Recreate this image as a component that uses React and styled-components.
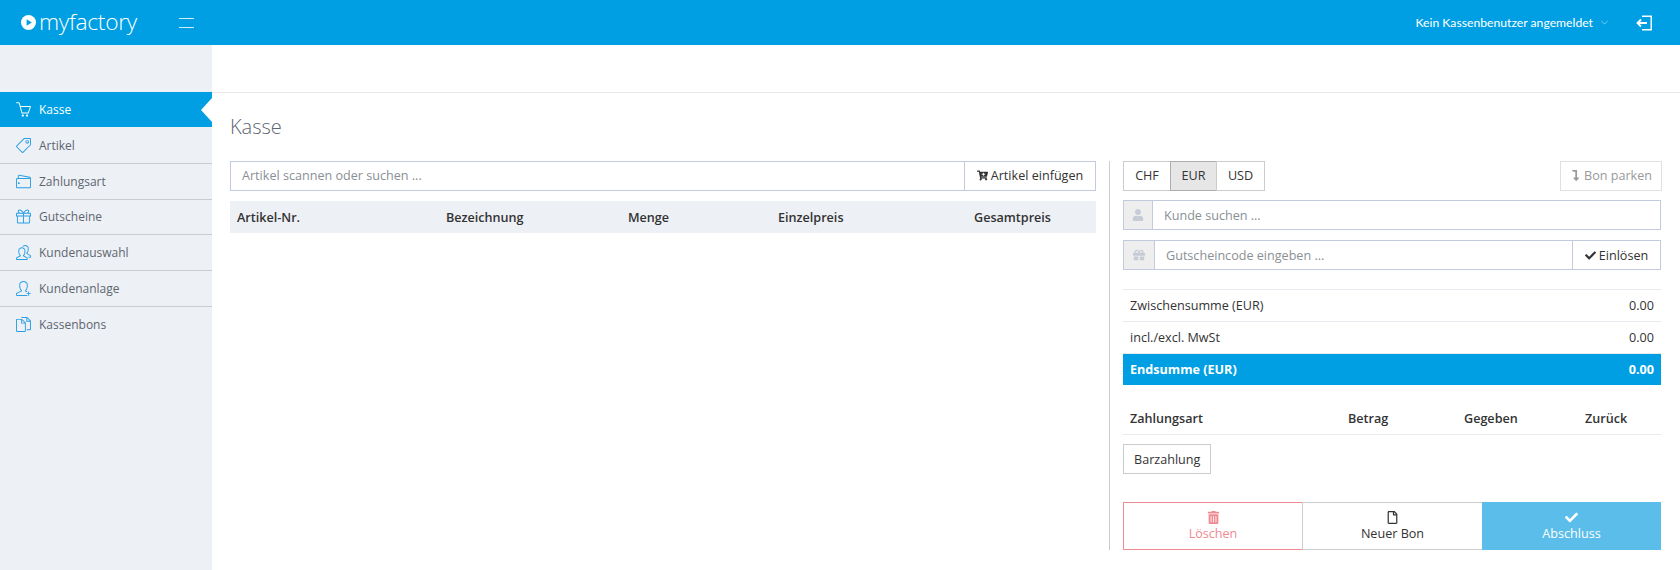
import React from 'react';
import styled, {createGlobalStyle} from 'styled-components';
import {SlBasket, SlTag, SlWallet, SlPresent, SlPeople, SlUserFollow, SlDocs, SlArrowDown} from 'react-icons/sl';
import {FaCartPlus, FaCheck, FaTrashAlt, FaRegFile, FaUser, FaGift, FaLevelDownAlt} from 'react-icons/fa';

const GlobalStyle = createGlobalStyle`
  html, body { margin: 0; padding: 0; background: #fff; }
  body { font-family: "Open Sans", "Liberation Sans", sans-serif; font-size: 12.6px; color: #333; }
  * { box-sizing: border-box; }
`;

const Page = styled.div`
  width: 1680px;
  height: 570px;
  display: flex;
  flex-direction: column;
  overflow: hidden;
`;

const TopBar = styled.header`
  height: 45px;
  flex: none;
  background: #009fe3;
  color: #fff;
  display: flex;
  align-items: center;
  padding: 0 0 0 21px;
`;

const Logo = styled.div`
  display: flex;
  align-items: center;
  width: 158px;
  font-size: 22.8px;
  font-weight: 300;
  letter-spacing: -0.3px;
  gap: 3px;
  padding-bottom: 3px;
  svg { width: 15px; height: 15px; margin-top: 3px; }
`;

const Burger = styled.div`
  width: 15px;
  height: 10px;
  border-top: 1px solid #d5effa;
  border-bottom: 1px solid #d5effa;
`;

const UserMenu = styled.div`
  margin-left: auto;
  display: flex;
  align-items: center;
  font-family: Lato, "Open Sans", sans-serif;
  font-size: 12.2px;
  gap: 8px;
  svg { width: 7px; height: 7px; color: #b5e2f6; }
`;

const Logout = styled.div`
  width: 16px;
  margin: 0 28px 0 28px;
  display: flex;
  svg { width: 16px; height: 16px; }
`;

const Body = styled.div`
  flex: 1;
  display: flex;
  min-height: 0;
`;

const Sidebar = styled.nav`
  width: 212px;
  flex: none;
  background: #edf0f5;
  padding-top: 47px;
`;

const NavItem = styled.div`
  position: relative;
  height: ${p => (p.$active ? '35px' : '36px')};
  display: flex;
  align-items: center;
  gap: 8px;
  padding: 0 0 1px 16px;
  font-size: 12px;
  color: ${p => (p.$active ? '#fff' : '#5d6670')};
  background: ${p => (p.$active ? '#009fe3' : 'transparent')};
  border-bottom: ${p => (p.$active ? 'none' : '1px solid #c9ccd0')};
  &:nth-child(2) { height: 37px; padding-bottom: 0; }
  &:nth-child(4) { height: 35px; }
  &:last-child { border-bottom: none; }
  svg { width: 15px; height: 15px; color: ${p => (p.$active ? '#fff' : '#2a9fe6')}; }
  ${p => p.$active && `
    &::after {
      content: "";
      position: absolute;
      right: 0;
      top: 6px;
      border-style: solid;
      border-width: 12px 11px 12px 0;
      border-color: transparent #fff transparent transparent;
    }
  `}
`;

const Main = styled.main`
  flex: 1;
  min-width: 0;
  display: flex;
  flex-direction: column;
`;

const Strip = styled.div`
  height: 48px;
  flex: none;
  border-bottom: 1px solid #e8e8e8;
`;

const Content = styled.div`
  flex: 1;
  padding: 0 19px 21px 18px;
  display: flex;
  flex-direction: column;
`;

const Title = styled.h1`
  margin: 0;
  height: 68px;
  padding-top: 20px;
  font-size: 20px;
  line-height: 27px;
  font-weight: 300;
  color: #5c6670;
`;

const Columns = styled.div`
  flex: 1;
  display: flex;
`;

const LeftCol = styled.section`
  width: 866px;
  flex: none;
`;

const RightCol = styled.section`
  flex: 1;
  margin-left: 13px;
  padding-left: 13px;
  border-left: 1px solid #ccc;
`;

const Group = styled.div`
  display: flex;
  height: 30px;
  margin-bottom: ${p => p.$mb || 0}px;
`;

const SearchGroup = styled(Group)`
  input, button { padding-bottom: 2px; }
`;

const Input = styled.input`
  flex: 1;
  min-width: 0;
  height: 100%;
  border: 1px solid #c2cbdd;
  padding: 0 11px;
  font: inherit;
  outline: none;
  &::placeholder { color: #8a8f94; opacity: 1; }
`;

const Addon = styled.span`
  width: ${p => p.$w}px;
  flex: none;
  display: flex;
  align-items: center;
  justify-content: center;
  background: #eee;
  border: 1px solid #c2cbdd;
  border-right: none;
  color: #c5ccd6;
  svg { width: 12px; height: 12px; }
`;

const Button = styled.button`
  height: 30px;
  padding: 0 10px;
  background: ${p => (p.$active ? '#e6e6e6' : '#fff')};
  border: 1px solid ${p => (p.$active ? '#adadad' : '#ccc')};
  color: #333;
  font: inherit;
  display: inline-flex;
  align-items: center;
  justify-content: center;
  gap: 3px;
  white-space: nowrap;
  svg { width: 11px; height: 11px; }
`;

const AppendButton = styled(Button)`
  width: ${p => p.$w}px;
  border-color: #c2cbdd;
  border-left: 0;
  padding: 0;
`;

const ParkButton = styled(Button)`
  margin-left: auto;
  margin-right: -1px;
  width: 102px;
  padding: 0;
  color: #999;
  border-color: #e0e0e0;
`;

const TableHead = styled.div`
  display: grid;
  grid-template-columns: 209px 182px 150px 196px 1fr;
  height: 32px;
  align-items: center;
  margin-top: 10px;
  padding-left: 7px;
  background: #edf0f5;
  font-weight: 600;
  color: #333;
`;

const Toolbar = styled.div`
  display: flex;
  margin-bottom: 9px;
  button { padding-bottom: 2px; }
`;

const CurrencyButton = styled(Button)`
  width: ${p => p.$w}px;
  padding: 0;
  margin-right: -1px;
`;

const Totals = styled.div`
  margin-top: 19px;
  border-top: 1px solid #e7eaee;
`;

const TotalRow = styled.div`
  height: ${p => (p.$total ? '31px' : '32px')};
  display: flex;
  justify-content: space-between;
  align-items: center;
  padding: 0 7px 1px;
  border-bottom: ${p => (p.$total ? 'none' : '1px solid #e7eaee')};
  background: ${p => (p.$total ? '#009fe3' : 'transparent')};
  color: ${p => (p.$total ? '#fff' : '#333')};
  font-weight: ${p => (p.$total ? 700 : 400)};
`;

const PayHead = styled.div`
  display: grid;
  grid-template-columns: 218px 116px 121px 1fr;
  height: 34px;
  align-items: center;
  margin-top: 16px;
  padding: 2px 0 0 7px;
  border-bottom: 1px solid #e7eaee;
  font-weight: 600;
`;

const CashRow = styled.div`
  margin-top: 9px;
`;

const Actions = styled.div`
  display: grid;
  grid-template-columns: 180px 180px 1fr;
  margin-top: 28px;
  height: 48px;
`;

const ActionButton = styled.button`
  display: flex;
  flex-direction: column;
  align-items: center;
  justify-content: center;
  gap: 1px;
  font: inherit;
  border: 1px solid ${p => p.$border};
  background: ${p => p.$bg};
  color: ${p => p.$color};
  margin-left: ${p => (p.$joined ? '-1px' : '0')};
  svg { width: 13px; height: 13px; }
`;

const nav = [
  ['Kasse', SlBasket],
  ['Artikel', SlTag],
  ['Zahlungsart', SlWallet],
  ['Gutscheine', SlPresent],
  ['Kundenauswahl', SlPeople],
  ['Kundenanlage', SlUserFollow],
  ['Kassenbons', SlDocs],
];

export default function App() {
  return (
    <Page>
      <GlobalStyle />
      <TopBar>
        <Logo>
          <svg viewBox="0 0 16 16">
            <circle cx="8" cy="8" r="8" fill="#fff" />
            <path d="M6 4.5 L11.5 8 L6 11.5 Z" fill="#009fe3" />
          </svg>
          myfactory
        </Logo>
        <Burger />
        <UserMenu>
          Kein Kassenbenutzer angemeldet <SlArrowDown />
        </UserMenu>
        <Logout>
          <svg viewBox="0 0 16 16" fill="none" stroke="#fff" strokeWidth="1.4">
            <path d="M6 1.2 H15.2 V14.8 H6" />
            <path d="M11 8 H1.5 M5 4.5 L1.5 8 L5 11.5" strokeWidth="1.8" />
          </svg>
        </Logout>
      </TopBar>
      <Body>
        <Sidebar>
          {nav.map(([label, Icon], i) => (
            <NavItem key={label} $active={i === 0}>
              <Icon />
              {label}
            </NavItem>
          ))}
        </Sidebar>
        <Main>
          <Strip />
          <Content>
            <Title>Kasse</Title>
            <Columns>
              <LeftCol>
                <SearchGroup>
                  <Input placeholder="Artikel scannen oder suchen ..." />
                  <AppendButton $w={131}><FaCartPlus /> Artikel einfügen</AppendButton>
                </SearchGroup>
                <TableHead>
                  <span>Artikel-Nr.</span>
                  <span>Bezeichnung</span>
                  <span>Menge</span>
                  <span>Einzelpreis</span>
                  <span>Gesamtpreis</span>
                </TableHead>
              </LeftCol>
              <RightCol>
                <Toolbar>
                  <CurrencyButton $w={48}>CHF</CurrencyButton>
                  <CurrencyButton $w={47} $active>EUR</CurrencyButton>
                  <CurrencyButton $w={49}>USD</CurrencyButton>
                  <ParkButton><FaLevelDownAlt /> Bon parken</ParkButton>
                </Toolbar>
                <Group $mb={10}>
                  <Addon $w={29}><FaUser /></Addon>
                  <Input placeholder="Kunde suchen ..." />
                </Group>
                <Group>
                  <Addon $w={31}><FaGift /></Addon>
                  <Input placeholder="Gutscheincode eingeben ..." />
                  <AppendButton $w={88}><FaCheck /> Einlösen</AppendButton>
                </Group>
                <Totals>
                  <TotalRow><span>Zwischensumme (EUR)</span><span>0.00</span></TotalRow>
                  <TotalRow><span>incl./excl. MwSt</span><span>0.00</span></TotalRow>
                  <TotalRow $total><span>Endsumme (EUR)</span><span>0.00</span></TotalRow>
                </Totals>
                <PayHead>
                  <span>Zahlungsart</span>
                  <span>Betrag</span>
                  <span>Gegeben</span>
                  <span>Zurück</span>
                </PayHead>
                <CashRow><Button>Barzahlung</Button></CashRow>
                <Actions>
                  <ActionButton $border="#f08a92" $bg="#fff" $color="#f08a92"><FaTrashAlt />Löschen</ActionButton>
                  <ActionButton $joined $border="#ccc" $bg="#fff" $color="#333"><FaRegFile />Neuer Bon</ActionButton>
                  <ActionButton $joined $border="#5bbde9" $bg="#5bbde9" $color="#fff"><FaCheck />Abschluss</ActionButton>
                </Actions>
              </RightCol>
            </Columns>
          </Content>
        </Main>
      </Body>
    </Page>
  );
}
